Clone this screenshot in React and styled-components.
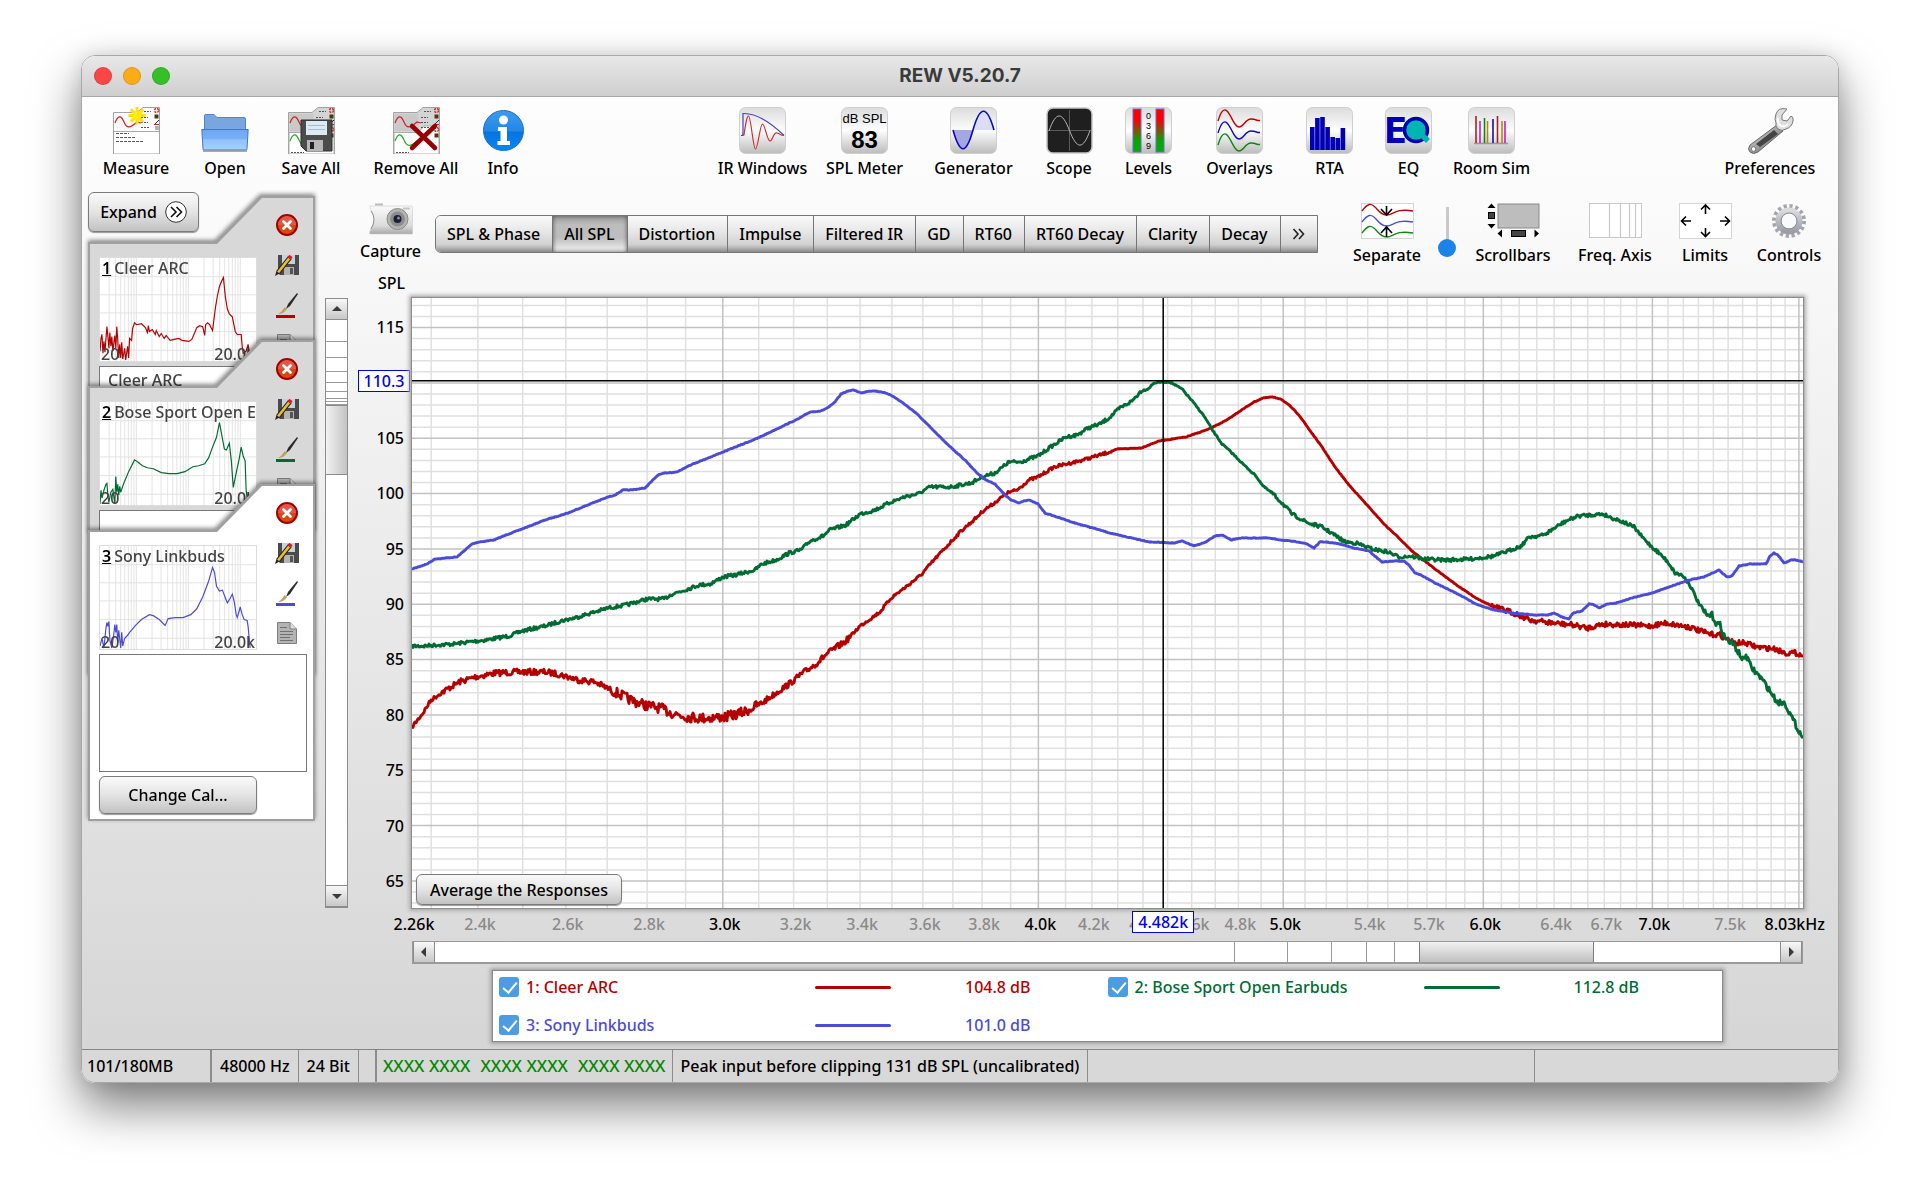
import { useState } from "react";
import styled, { createGlobalStyle, css } from "styled-components";

const FONT = '"Noto Sans", "Open Sans", sans-serif';
const RED = "#b40000";
const GREEN = "#006b32";
const BLUE = "#4b4bd8";

const PLOT_W = 1391;
const PLOT_H = 610;
const F_MIN = 2.26;
const F_MAX = 8.03;
const DB_MAX = 117.67;
const DB_MIN = 62.56;

const freqToX = (f) =>
  (Math.log(f / F_MIN) / Math.log(F_MAX / F_MIN)) * PLOT_W;
const dbToY = (db) => ((DB_MAX - db) / (DB_MAX - DB_MIN)) * PLOT_H;
const percent = (n, total) => `${(n / total) * 100}%`;

const parse = (s) => s.split(" ").map((p) => p.split(",").map(Number));

const toPath = (source, noise) => {
  const points = parse(source);
  let seed = 7;
  let d = "";
  for (let i = 0; i < points.length - 1; i++) {
    const [x0, y0] = points[i];
    const [x1, y1] = points[i + 1];
    for (let x = x0; x < x1; x++) {
      seed = (seed * 16807) % 2147483647;
      const jitter = (seed / 2147483647 - 0.5) * 2 * noise(x);
      const y = y0 + ((y1 - y0) * (x - x0)) / (x1 - x0) + jitter;
      d += `${d ? "L" : "M"}${x} ${y.toFixed(1)}`;
    }
  }
  const [lx, ly] = points[points.length - 1];
  return `${d}L${lx} ${ly}`;
};

const redNoise = (x) => {
  if (x < 30) return 2;
  if (x < 200) return 3;
  if (x < 345) return 5;
  if (x < 440) return 3;
  if (x < 700) return 1.5;
  if (x < 1080) return 0.3;
  return 2.6;
};
const greenNoise = (x) => (x > 1290 ? 3 : x > 730 && x < 860 ? 0.7 : 1.7);
const blueNoise = () => 0.3;

const measurements = [
  {
    id: 1,
    name: "Cleer ARC",
    color: RED,
    level: "104.8 dB",
    notes: "Cleer ARC",
    thumb:
      "0,95 1,82 2,78 3,97 4,85 5,96 7,70 8,80 9,92 10,76 11,90 12,80 13,95 15,79 16,92 17,70 18,84 19,102 20,88 21,102 22,86 23,103 25,92 26,104 28,90 29,102 30,82 32,84 33,72 35,66 37,68 42,67 46,71 48,76 49,69 50,75 53,73 56,78 57,74 60,80 62,77 65,82 67,79 71,84 75,83 80,82 83,84 90,85 93,83 96,76 98,71 101,69 104,70 106,79 107,68 109,66 111,68 114,74 117,50 119,38 121,29 123,24 125,20 127,40 129,52 131,57 134,60 137,75 139,78 143,78 144,90 145,97 148,95 150,88 152,101",
    path: toPath(
      "0,429 11,415 19,402 29,395 47,384 63,379 83,375 106,374 133,374 146,376 167,382 183,384 201,393 219,402 233,407 248,410 260,415 276,419 291,420 314,419 332,414 350,405 364,395 377,386 391,375 405,365 416,355 434,343 448,328 468,314 479,300 495,288 509,277 522,262 536,247 549,233 563,221 572,212 581,206 595,195 605,192 617,182 626,179 642,169 667,163 688,157 706,151 729,150 747,143 774,139 797,131 815,122 828,113 842,104 851,100 860,99 869,101 878,108 887,117 899,134 910,149 923,169 937,187 955,207 973,227 987,240 1000,253 1023,271 1046,288 1064,300 1082,309 1105,316 1118,322 1141,325 1161,327 1175,330 1191,326 1218,327 1238,328 1254,325 1277,329 1297,336 1308,337 1322,345 1333,345 1345,349 1363,351 1374,355 1385,355 1391,358",
      redNoise
    ),
  },
  {
    id: 2,
    name: "Bose Sport Open Earbuds",
    color: GREEN,
    level: "112.8 dB",
    notes: "",
    thumb:
      "0,104 1,90 2,98 4,90 6,84 7,83 8,96 9,102 11,92 13,89 15,104 16,76 17,92 18,84 19,95 20,86 21,92 24,83 29,71 35,59 38,61 43,65 48,67 54,68 62,72 70,73 78,73 86,71 94,66 100,65 106,63 110,57 114,46 118,36 121,21 123,32 126,48 128,49 131,42 133,60 135,87 138,72 141,58 143,46 145,55 147,60 148,90 150,104",
    path: toPath(
      "0,348 11,348 24,347 42,346 56,344 74,342 97,338 110,333 133,328 149,323 162,320 176,316 196,310 214,307 235,301 252,301 260,296 273,292 287,287 298,286 311,279 323,277 343,272 350,266 364,262 377,255 389,252 398,243 411,238 418,232 434,227 448,216 463,212 479,204 495,198 506,196 518,189 538,189 559,185 572,178 583,175 597,164 608,164 626,158 640,148 654,139 665,137 676,130 688,126 697,120 708,110 720,103 729,93 736,91 742,85 749,84 758,84 770,91 781,104 792,118 801,133 810,146 819,154 833,168 844,178 851,188 860,195 871,206 880,216 896,225 910,229 921,236 933,244 944,245 960,251 976,254 987,259 998,258 1012,261 1032,262 1059,261 1082,258 1096,253 1109,248 1117,239 1132,237 1141,231 1154,223 1166,218 1177,217 1191,216 1200,220 1209,223 1222,229 1231,240 1240,249 1247,255 1256,264 1263,275 1270,277 1277,285 1286,304 1295,318 1300,317 1304,325 1308,327 1313,340 1322,347 1331,362 1334,357 1339,369 1349,380 1356,390 1365,404 1373,405 1381,422 1391,440",
      greenNoise
    ),
  },
  {
    id: 3,
    name: "Sony Linkbuds",
    color: BLUE,
    level: "101.0 dB",
    notes: "",
    thumb:
      "0,102 2,94 4,104 6,84 7,78 8,82 9,77 10,96 12,104 14,90 15,80 16,88 17,80 18,98 19,86 21,104 22,88 23,102 25,94 28,91 30,88 36,81 42,75 50,70 54,71 60,75 64,79 66,81 69,74 76,73 84,73 92,70 98,64 104,52 110,36 114,22 116,27 118,41 121,46 124,45 127,53 129,58 132,53 134,49 136,57 138,70 139,73 141,66 142,62 144,70 146,75 149,76 150,82 152,104",
    path: toPath(
      "0,271 15,266 23,261 45,259 60,246 67,244 82,242 94,237 110,231 133,222 156,215 178,206 196,199 203,197 211,192 219,192 233,190 238,185 246,177 253,175 265,174 276,168 296,160 311,154 346,140 373,127 386,121 398,114 409,113 417,109 423,104 429,96 436,93 442,92 449,95 457,93 463,93 470,94 479,97 491,105 504,115 518,129 531,142 545,155 554,163 565,175 574,182 583,186 592,196 599,202 607,205 611,203 617,202 626,206 633,215 645,219 663,225 681,230 698,235 706,237 720,240 738,244 763,245 770,243 782,248 794,244 803,238 810,237 819,242 828,240 856,240 869,242 887,244 895,246 902,250 908,244 914,244 928,246 942,250 957,253 964,259 970,264 982,263 992,263 997,267 1003,275 1009,277 1023,285 1046,296 1064,306 1082,312 1100,315 1123,317 1136,317 1142,315 1150,319 1157,321 1161,315 1170,313 1177,306 1181,306 1187,310 1195,306 1204,305 1220,300 1240,295 1254,290 1277,282 1292,279 1307,272 1315,279 1320,278 1327,268 1338,266 1354,266 1358,258 1362,255 1366,257 1372,265 1379,262 1385,262 1391,264",
      blueNoise
    ),
  },
];

const graphTabs = [
  "SPL & Phase",
  "All SPL",
  "Distortion",
  "Impulse",
  "Filtered IR",
  "GD",
  "RT60",
  "RT60 Decay",
  "Clarity",
  "Decay",
];

const splTicks = [115, 110, 105, 100, 95, 90, 85, 80, 75, 70, 65];

const freqTicks = [
  2.4, 2.6, 2.8, 3, 3.2, 3.4, 3.6, 3.8, 4, 4.2, 4.4, 4.6, 4.8, 5, 5.4, 5.7, 6,
  6.4, 6.7, 7, 7.5,
];

/* ---------- icons ---------- */

const Tile = () => (
  <>
    <defs>
      <linearGradient id="tile" x1="0" y1="0" x2="0" y2="1">
        <stop offset="0" stopColor="#dcdcdc" />
        <stop offset="0.5" stopColor="#fdfdfd" />
        <stop offset="1" stopColor="#bcbcbc" />
      </linearGradient>
    </defs>
    <rect x="0.5" y="0.5" width="46" height="46" rx="6" fill="url(#tile)" stroke="#cfcfcf" />
  </>
);

const CardArt = ({ double }) => (
  <>
    <path d="M.5 5.500H24L30 .5H46.500V47H.5Z" fill={double ? "#d4d4d4" : "#fff"} stroke="#a2a2a2" />
    <rect x="1.500" y="7" width="24" height="17" fill={double ? "#c9c9c9" : "#fafafa"} />
    <path d="M2 16C5 8 8 8 11 15S17 21 24 15L28 16" fill="none" stroke="#c22" strokeWidth="1.200" />
    {double ? (
      <>
        <path d="M1 25.500H25L31 19H46V47H1Z" fill="#fff" stroke="#aaa" />
        <path d="M2 34C5 26 8 26 11 33S17 40 24 34" fill="none" stroke="#2a2" strokeWidth="1.200" />
        <path d="M3 45.500H16" stroke="#555" strokeDasharray="2 1" />
        <circle cx="43.500" cy="22.500" r="2" fill="none" stroke="#d22" strokeWidth="1.500" strokeDasharray="2 1" />
        <rect x="41.500" y="26.500" width="4" height="4" fill="#443c12" />
      </>
    ) : (
      <>
        <path d="M1 24.500H46" stroke="#aaa" />
        <path d="M3 26.500H16M3 30.500H22M3 34.500H31" stroke="#555" strokeDasharray="3 1" />
      </>
    )}
    <path d="M31 4.500H38M28 10.500H35M28 15.500H35M28 20.500H37" stroke="#555" strokeDasharray="2 1" />
    <circle cx="43.500" cy="3.500" r="2" fill="none" stroke="#d22" strokeWidth="1.500" strokeDasharray="2 1" />
    <rect x="41.500" y="7.500" width="4" height="4" fill="#443c12" />
    <path d="M42 17L46 13" stroke="#333" />
    <path d="M41 17.500H46" stroke="#c22" />
    {!double && <rect x="42" y="19" width="4" height="4" fill="#b5b5b5" />}
  </>
);

const MeasureIcon = () => (
  <svg width="47" height="47" viewBox="0 0 47 47">
    <CardArt />
    <g stroke="#ffe000" strokeWidth="3" strokeLinecap="round">
      <path d="M24 1V16M16.500 8.500H31.500M18.700 3.200L29.300 13.800M29.300 3.200L18.700 13.800" />
    </g>
    <circle cx="24" cy="8.500" r="4" fill="#ffec10" />
  </svg>
);

const OpenIcon = () => (
  <svg width="48" height="47" viewBox="0 0 48 47">
    <defs>
      <linearGradient id="folder" x1="0" y1="0" x2="0" y2="1">
        <stop offset="0" stopColor="#6fa6f0" />
        <stop offset="0.45" stopColor="#78b0f8" />
        <stop offset="0.5" stopColor="#92c2fa" />
        <stop offset="1" stopColor="#a6cffb" />
      </linearGradient>
    </defs>
    <path d="M3.500 24V8.500Q3.500 7.500 5 7.500H13L16 10.500H43Q44.500 10.500 44.500 12V24Z" fill="#7aa6e0" stroke="#5484c8" />
    <path d="M.8 22.500H47.200L46 42Q46 43 45 43H3Q2 43 2 42Z" fill="url(#folder)" stroke="#3f78cc" />
    <path d="M2 44H46" stroke="#8a8f98" strokeWidth="1.500" />
  </svg>
);

const SaveAllIcon = () => (
  <svg width="47" height="47" viewBox="0 0 47 47">
    <CardArt double />
    <path d="M13 13H44V44H18L13 39Z" fill="#4c4c4c" stroke="#2e2e2e" />
    <rect x="18" y="14" width="21" height="14" fill="#dce8f2" />
    <path d="M20 18.500H37M20 22.500H37" stroke="#a9bccb" />
    <rect x="19" y="33" width="16" height="11" fill="#b8b8b8" />
    <rect x="22" y="35" width="4" height="7" fill="#222" />
  </svg>
);

const RemoveAllIcon = () => (
  <svg width="47" height="47" viewBox="0 0 47 47">
    <CardArt double />
    <path d="M19 19L42 41M42 19L19 41" stroke="#980000" strokeWidth="4.500" strokeLinecap="round" />
  </svg>
);

const InfoIcon = () => (
  <svg width="47" height="47" viewBox="0 0 47 47">
    <defs>
      <linearGradient id="info" x1="0" y1="0" x2="0" y2="1">
        <stop offset="0" stopColor="#3d9bef" />
        <stop offset="0.5" stopColor="#2288e6" />
        <stop offset="0.55" stopColor="#0674e0" />
        <stop offset="1" stopColor="#0a86f4" />
      </linearGradient>
    </defs>
    <circle cx="23.500" cy="23.500" r="20" fill="url(#info)" stroke="#1b70c4" />
    <circle cx="23.500" cy="13" r="4.500" fill="#fff" />
    <path d="M18 20H27V34H30V38H17.500V34H20.500V24H18Z" fill="#fff" />
  </svg>
);

const IrIcon = () => (
  <svg width="47" height="47" viewBox="0 0 47 47">
    <Tile />
    <path d="M2 28.500H4V6.500C17 6 30 14 45 28.500" fill="none" stroke="#4040c8" strokeWidth="1.200" />
    <path d="M3 28H5C7 14 8 9 9.500 9C12 9 14 42 16.500 42S21 17 23.500 17S28 34 31 34S34 25 38 26S41 28.500 45 28.500" fill="none" stroke="#c83030" strokeWidth="1.200" />
  </svg>
);

const SplIcon = () => (
  <svg width="47" height="47" viewBox="0 0 47 47">
    <Tile />
    <IconText x="23.500" y="16" $size={13}>dB SPL</IconText>
    <IconText x="23.500" y="41" $size={24} $bold>83</IconText>
  </svg>
);

const GeneratorIcon = () => (
  <svg width="47" height="47" viewBox="0 0 47 47">
    <Tile />
    <path d="M3 23C10 48 16 48 23 23Z" fill="#a6a6e2" />
    <path d="M23 23C30 -2 37 -2 44 23Z" fill="#dcdcf3" />
    <path d="M3 23C10 48 16 48 23 23S37 -2 44 23" fill="none" stroke="#0808c0" strokeWidth="1.600" />
  </svg>
);

const ScopeIcon = () => (
  <svg width="47" height="47" viewBox="0 0 47 47">
    <rect x="1" y="1" width="45" height="45" rx="6" fill="#1f1f1f" stroke="#c6c6c6" strokeWidth="1.500" />
    <path d="M23.500 3V44M2 23.500H45" stroke="#5a5a5a" />
    <path d="M3 24C10 4 16 4 23.500 23.500S37 43 44 23.500" fill="none" stroke="#b5b5b5" />
  </svg>
);

const LevelsIcon = () => (
  <svg width="47" height="47" viewBox="0 0 47 47">
    <defs>
      <linearGradient id="level" x1="0" y1="0" x2="0" y2="1">
        <stop offset="0.25" stopColor="#f00" />
        <stop offset="0.75" stopColor="#0a0" />
      </linearGradient>
    </defs>
    <Tile />
    <rect x="8" y="2" width="8" height="43" fill="url(#level)" stroke="#6a6ad0" />
    <rect x="31" y="2" width="8" height="43" fill="url(#level)" stroke="#6a6ad0" />
    {[0, 3, 6, 9].map((n, i) => (
      <IconText key={n} x="23.500" y={12 + i * 10} $size={9}>{n}</IconText>
    ))}
  </svg>
);

const OverlaysIcon = () => (
  <svg width="47" height="47" viewBox="0 0 47 47">
    <Tile />
    {["#c00000", "#0c0cc8", "#0a8a0a"].map((color, i) => (
      <path key={color} transform={`translate(0 ${i * 12})`} d="M2 14C5 4 8 1 11 4C16 9 18 20 23 20S29 12 35 12S40 14 44 13.500" fill="none" stroke={color} strokeWidth="1.400" />
    ))}
  </svg>
);

const RtaIcon = () => (
  <svg width="47" height="47" viewBox="0 0 47 47">
    <Tile />
    {[20, 11, 10, 20, 30, 31, 21].map((top, i) => (
      <rect key={i} x={4 + i * 5.1} y={top} width="4.600" height={43 - top} fill="#0000b4" />
    ))}
  </svg>
);

const EqIcon = () => (
  <svg width="47" height="47" viewBox="0 0 47 47">
    <Tile />
    <EqLetter x="0" y="36">E</EqLetter>
    <circle cx="31" cy="23" r="11.500" fill="#00b4b4" stroke="#0000b0" strokeWidth="3.500" />
    <path d="M36 31L40 27L45 32L41 36Z" fill="#00b4b4" />
  </svg>
);

const RoomIcon = () => (
  <svg width="47" height="47" viewBox="0 0 47 47">
    <Tile />
    <path d="M6 36.500H40" stroke="#999" strokeWidth="1.500" />
    {[
      [8, 9, "#b02020"],
      [12, 14, "#c020c0"],
      [16.5, 11, "#108020"],
      [19.5, 14, "#b8860b"],
      [25, 12, "#1010b0"],
      [29.5, 9, "#b02020"],
      [34, 14, "#b8860b"],
      [37, 14, "#c020c0"],
    ].map(([x, y, color]) => (
      <path key={x} d={`M${x} ${y}V36`} stroke={color} strokeWidth="1.600" />
    ))}
  </svg>
);

const WrenchIcon = () => (
  <svg width="47" height="47" viewBox="0 0 47 47">
    <defs>
      <linearGradient id="steel" x1="0" y1="0" x2="1" y2="1">
        <stop offset="0" stopColor="#f2f2f2" />
        <stop offset="0.5" stopColor="#a0a0a0" />
        <stop offset="1" stopColor="#555" />
      </linearGradient>
    </defs>
    <path d="M30 18L36 24L11 45Q6 48 3 45T3 38Z" fill="url(#steel)" stroke="#666" />
    <path d="M27 23L31 27L13 40L9 37Z" fill="#444" />
    <circle cx="6.500" cy="42" r="2.300" fill="#fff" stroke="#777" />
    <path d="M40 2Q31 0 29 7Q27 12 29 16Q28 19 31 22Q35 25 39 22Q45 20 46 14Q47 10 44 9L40 14L35 13L35 8Z" fill="#dedede" stroke="#777" />
    <path d="M31 11Q30 16 34 19Q38 20 41 17" fill="none" stroke="#fff" strokeWidth="2" />
  </svg>
);

const CameraIcon = () => (
  <svg width="44" height="32" viewBox="0 0 44 32">
    <defs>
      <linearGradient id="camera" x1="0" y1="0" x2="0" y2="1">
        <stop offset="0" stopColor="#fafafa" />
        <stop offset="0.7" stopColor="#dcdcdc" />
        <stop offset="1" stopColor="#a8a8a8" />
      </linearGradient>
    </defs>
    <path d="M6 1.500H14" stroke="#b9b9b9" strokeWidth="2" />
    <path d="M1 3H42Q43.500 3 43.500 5V31H1Q0 31 1 28Q9 16 1 5Z" fill="url(#camera)" stroke="#c9c9c9" strokeWidth="0.600" />
    <path d="M2 8Q8 16 2 26" fill="none" stroke="#8f8f8f" />
    <path d="M34 5.500H41" stroke="#c4c4c4" strokeWidth="2" />
    <circle cx="28.500" cy="16" r="10.500" fill="#b4b4b4" stroke="#8b8b8b" />
    <circle cx="28.500" cy="16" r="7.500" fill="#8d8d8d" />
    <circle cx="28.500" cy="16" r="4" fill="#1d2030" />
    <circle cx="29.500" cy="15" r="1.500" fill="#7d86c0" />
  </svg>
);

const SeparateIcon = () => (
  <svg width="53" height="36" viewBox="0 0 53 36">
    <rect x="0.5" y="0.5" width="52" height="35" fill="#fff" stroke="#d4d4d4" />
    {["#c00000", BLUE, "#0a8a0a"].map((color, i) => (
      <path key={color} transform={`translate(0 ${i * 11})`} d="M1 8C7 0 10 0 14 4S20 12 26 12S34 5 52 8" fill="none" stroke={color} strokeWidth="1.300" />
    ))}
    <path d="M25.500 3V12M20 6L25.500 12L31 6M25.500 34V24M20 30L25.500 24L31 30" fill="none" stroke="#000" strokeWidth="1.600" />
  </svg>
);

const ScrollbarsIcon = () => (
  <svg width="53" height="36" viewBox="0 0 53 36">
    <rect x="11" y="1" width="41" height="24" fill="#bdbdbd" stroke="#8a8a8a" />
    <rect x="1.500" y="9.500" width="6" height="6" fill="#444" stroke="#000" />
    <path d="M.5 5L4.500 .5L8.500 5ZM.5 21L4.500 25.500L8.500 21Z" />
    <rect x="24.500" y="27.500" width="14" height="6" fill="#444" stroke="#000" />
    <path d="M15 26.500L10.500 30.500L15 34.500ZM47.500 26.500L52 30.500L47.500 34.500Z" />
  </svg>
);

const FreqAxisIcon = () => (
  <svg width="53" height="36" viewBox="0 0 53 36">
    <rect x="0.5" y="0.5" width="52" height="34" fill="#fff" stroke="#c8c8c8" />
    <path d="M20.500 1V34M31.500 1V34M40.500 1V34M46.500 1V34" stroke="#c8c8c8" strokeWidth="1.200" />
  </svg>
);

const LimitsIcon = () => (
  <svg width="53" height="36" viewBox="0 0 53 36">
    <rect x="0.5" y="0.5" width="52" height="35" fill="#fff" stroke="#d4d4d4" />
    <path d="M26.500 11V2M22 6.500L26.500 2L31 6.500M26.500 25V33.500M22 29L26.500 33.500L31 29M12 18H2.500M7 13.500L2.500 18L7 22.500M41 18H50.500M46 13.500L50.500 18L46 22.500" fill="none" stroke="#000" strokeWidth="1.600" />
  </svg>
);

const GearIcon = () => (
  <svg width="36" height="36" viewBox="0 0 36 36">
    <defs>
      <linearGradient id="gear" x1="0" y1="0" x2="0" y2="1">
        <stop offset="0" stopColor="#dadae0" />
        <stop offset="1" stopColor="#9d9da6" />
      </linearGradient>
    </defs>
    <circle cx="18" cy="18" r="15" fill="none" stroke="#a4a4ad" strokeWidth="4" strokeDasharray="3.200 2.690" />
    <circle cx="18" cy="18" r="10.500" fill="none" stroke="url(#gear)" strokeWidth="6" />
    <circle cx="18" cy="18" r="8" fill="none" stroke="#8d8d95" />
  </svg>
);

const CloseIcon = () => (
  <svg width="22" height="22" viewBox="0 0 22 22">
    <circle cx="11" cy="11" r="10" fill="#d9480c" stroke="#a00000" strokeWidth="2" />
    <path d="M2 11A9 9 0 0 1 20 11Z" fill="#e0564a" />
    <path d="M7.500 7.500L14.500 14.500M14.500 7.500L7.500 14.500" stroke="#fff" strokeWidth="2.800" strokeLinecap="round" />
  </svg>
);

const RenameIcon = () => (
  <svg width="24" height="22" viewBox="0 0 24 22">
    <path d="M3 1H24V21H5L3 19Z" fill="#4a4a4a" />
    <rect x="7" y="1" width="13" height="9" fill="#c3d3de" />
    <rect x="9" y="13" width="10" height="8" fill="#b4b4b4" />
    <rect x="15" y="14" width="3" height="6" fill="#555" />
    <path d="M3 18.500L15 3.500" stroke="#222" strokeWidth="4.600" />
    <path d="M2.800 18.700L14.500 4" stroke="#f0c020" strokeWidth="2.600" />
    <path d="M14 4.500L16 2" stroke="#d81c1c" strokeWidth="4" />
    <path d="M0 22L1.500 17L4.500 19.500Z" fill="#222" />
  </svg>
);

const BrushIcon = ({ color }) => (
  <svg width="22" height="26" viewBox="0 0 22 26">
    <path d="M21 0L12 11L10 16L14 13L22 1Z" fill="#2b2b2b" />
    <path d="M8.500 14L11 16Q8 21 2 21Q6 19 8.500 14Z" fill="#bfa060" />
    <rect y="22" width="19" height="3" fill={color} />
  </svg>
);

const NotesIcon = () => (
  <svg width="22" height="24" viewBox="0 0 22 24">
    <path d="M1.500 1.500H14L20.500 8V22.500H1.500Z" fill="#b4b4b4" stroke="#7d7d7d" strokeLinejoin="round" />
    <path d="M14 1.500V8H20.500" fill="#ddd" stroke="#7d7d7d" />
    <path d="M4 6.500H11M4 10.500H17M4 13.500H17M4 16.500H14M4 19.500H17" stroke="#707070" />
  </svg>
);

const ChevronsIcon = () => (
  <svg width="22" height="22" viewBox="0 0 22 22">
    <circle cx="11" cy="11" r="10.300" fill="#fff" stroke="#333" />
    <path d="M6 6L11 11L6 16M11.500 6L16.500 11L11.500 16" fill="none" stroke="#111" strokeWidth="1.600" />
  </svg>
);

const MoreIcon = () => (
  <svg width="13" height="12" viewBox="0 0 13 12">
    <path d="M1.500 1L6 6L1.500 11M7 1L11.500 6L7 11" fill="none" stroke="#222" strokeWidth="1.600" />
  </svg>
);

const arrows = {
  up: "M1 7L6 2L11 7Z",
  down: "M1 3L6 8L11 3Z",
  left: "M8 0L3 5L8 10Z",
  right: "M4 0L9 5L4 10Z",
};

const Arrow = ({ to }) => (
  <svg width="12" height="10" viewBox="0 0 12 10">
    <path d={arrows[to]} fill="#3a3a3a" />
  </svg>
);

/* ---------- parts ---------- */

const fileTools = [
  ["Measure", MeasureIcon],
  ["Open", OpenIcon],
  ["Save All", SaveAllIcon],
  ["Remove All", RemoveAllIcon],
  ["Info", InfoIcon],
];

const windowTools = [
  ["IR Windows", IrIcon],
  ["SPL Meter", SplIcon],
  ["Generator", GeneratorIcon],
  ["Scope", ScopeIcon],
  ["Levels", LevelsIcon],
  ["Overlays", OverlaysIcon],
  ["RTA", RtaIcon],
  ["EQ", EqIcon],
  ["Room Sim", RoomIcon],
];

const Tool = ({ label, icon: Icon }) => (
  <ToolButton type="button">
    <Icon />
    {label}
  </ToolButton>
);

const thumbLines = () => {
  const xs = [];
  [10, 100, 1000, 10000].forEach((decade) => {
    for (let n = 1; n < 10; n++) {
      const f = n * decade;
      if (f > 20 && f < 20000) xs.push((Math.log10(f / 20) / 3) * 158);
    }
  });
  return xs;
};

const MeasurementCard = ({ item, active }) => (
  <CardShadow $active={active}>
    <CardEdge>
      <CardBody $active={active}>
        <Thumbnail>
          <ThumbChart viewBox="0 0 158 105" preserveAspectRatio="none">
            <path
              d={`${thumbLines().map((x) => `M${x.toFixed(1)} 0V105`).join("")}M0 19H158M0 37.500H158M0 56H158M0 75H158M0 94H158`}
              stroke="#e2e2e2"
              fill="none"
            />
            <polyline points={item.thumb} fill="none" stroke={item.color} strokeWidth="1.200" />
          </ThumbChart>
          <ThumbTitle>
            <b>{item.id}</b>
            {item.name}
          </ThumbTitle>
          <ThumbRange>
            <span>20</span>
            <span>20.0k</span>
          </ThumbRange>
        </Thumbnail>
        <CardActions>
          <IconButton type="button" aria-label={`Remove ${item.name}`}>
            <CloseIcon />
          </IconButton>
          <IconButton type="button" aria-label={`Save ${item.name}`}>
            <RenameIcon />
          </IconButton>
          <IconButton type="button" aria-label={`Colour of ${item.name}`}>
            <BrushIcon color={item.color} />
          </IconButton>
          <IconButton type="button" aria-label={`Notes of ${item.name}`}>
            <NotesIcon />
          </IconButton>
        </CardActions>
        <Notes aria-label={`Notes for ${item.name}`} defaultValue={item.notes} />
        {active && <PushButton type="button">Change Cal...</PushButton>}
      </CardBody>
    </CardEdge>
  </CardShadow>
);

const minorFreqs = Array.from({ length: 58 }, (_, i) => (23 + i) / 10);
const minorDbs = Array.from({ length: 55 }, (_, i) => 63 + i);

const gridPath = (major) =>
  minorFreqs
    .filter((f) => Number.isInteger(f) === major)
    .map((f) => `M${freqToX(f).toFixed(1)} 0V${PLOT_H}`)
    .concat(
      minorDbs
        .filter((db) => (db % 5 === 0) === major)
        .map((db) => `M0 ${dbToY(db).toFixed(1)}H${PLOT_W}`)
    )
    .join("");

const cursor = { freq: 4.482, db: 110.19, label: "110.3" };

const App = () => {
  const [tab, setTab] = useState("All SPL");
  const [hidden, setHidden] = useState([]);

  const toggle = (id) =>
    setHidden((ids) =>
      ids.includes(id) ? ids.filter((i) => i !== id) : [...ids, id]
    );

  const cursorLeft = percent(freqToX(cursor.freq), PLOT_W);
  const cursorTop = percent(dbToY(cursor.db), PLOT_H);

  return (
    <Page>
      <GlobalStyle />
      <Window>
        <TitleBar>
          <Lights>
            <Light type="button" aria-label="Close" $color="#fb4646" />
            <Light type="button" aria-label="Minimise" $color="#fdac18" />
            <Light type="button" aria-label="Zoom" $color="#35c029" />
          </Lights>
          <Title>REW V5.20.7</Title>
        </TitleBar>

        <Toolbar>
          <ToolGroup $columns="84px 94px 78px 132px 42px">
            {fileTools.map(([label, icon]) => (
              <Tool key={label} label={label} icon={icon} />
            ))}
          </ToolGroup>
          <ToolGroup $columns="98px 106px 112px 79px 80px 102px 78px 80px 86px">
            {windowTools.map(([label, icon]) => (
              <Tool key={label} label={label} icon={icon} />
            ))}
          </ToolGroup>
          <ToolGroup $columns="92px">
            <Tool label="Preferences" icon={WrenchIcon} />
          </ToolGroup>
        </Toolbar>

        <Main>
          <Sidebar>
            <ExpandButton type="button">
              Expand <ChevronsIcon />
            </ExpandButton>
            <CardStack>
              {measurements.map((item) => (
                <MeasurementCard key={item.id} item={item} active={item.id === 3} />
              ))}
            </CardStack>
          </Sidebar>

          <Content>
            <GraphHeader>
              <GraphTool type="button">
                <CameraIcon />
                Capture
              </GraphTool>
              <Tabs>
                {graphTabs.map((name) => (
                  <Tab key={name} type="button" $active={name === tab} onClick={() => setTab(name)}>
                    {name}
                  </Tab>
                ))}
                <Tab type="button" aria-label="More graphs">
                  <MoreIcon />
                </Tab>
              </Tabs>
              <GraphControls>
                <GraphTool type="button"><SeparateIcon />Separate</GraphTool>
                <SeparationSlider type="range" aria-label="Separation" defaultValue="0" />
                <GraphTool type="button"><ScrollbarsIcon />Scrollbars</GraphTool>
                <GraphTool type="button"><FreqAxisIcon />Freq. Axis</GraphTool>
                <GraphTool type="button"><LimitsIcon />Limits</GraphTool>
                <GraphTool type="button"><GearIcon />Controls</GraphTool>
              </GraphControls>
            </GraphHeader>

            <AxisTitle>SPL</AxisTitle>

            <ChartRow>
              <ScrollColumn>
                <ScrollButton type="button" aria-label="Scroll up"><Arrow to="up" /></ScrollButton>
                <ScrollTrack>
                  {[21, 37, 51, 62, 71, 78, 81, 84].map((n) => (
                    <RowMark key={n} style={{ top: percent(n, 567) }} />
                  ))}
                  <ScrollThumbY style={{ top: percent(85, 567), height: percent(71, 567) }} />
                </ScrollTrack>
                <ScrollButton type="button" aria-label="Scroll down"><Arrow to="down" /></ScrollButton>
              </ScrollColumn>
              <SplAxis>
                {splTicks.map((db) => (
                  <SplTick key={db} $covered={db === 110}>{db}</SplTick>
                ))}
                <CursorDb style={{ top: cursorTop }}>{cursor.label}</CursorDb>
              </SplAxis>
              <Plot>
                <PlotSvg viewBox={`0 0 ${PLOT_W} ${PLOT_H}`} preserveAspectRatio="none">
                  <path d={gridPath(false)} stroke="#e0e0e0" strokeWidth="1.500" />
                  <path d={gridPath(true)} stroke="#c2c2c2" strokeWidth="1.500" />
                  {measurements
                    .filter((m) => !hidden.includes(m.id))
                    .map((m) => (
                      <path key={m.id} d={m.path} fill="none" stroke={m.color} strokeWidth="2.900" strokeLinejoin="round" />
                    ))}
                  <path
                    d={`M0 ${dbToY(cursor.db).toFixed(1)}H${PLOT_W}M${freqToX(cursor.freq).toFixed(1)} 0V${PLOT_H}`}
                    stroke="#000"
                    strokeWidth="1.500"
                  />
                </PlotSvg>
                <AverageButton type="button">Average the Responses</AverageButton>
              </Plot>
            </ChartRow>

            <FreqAxis>
              <FreqTick $major style={{ left: 0 }}>2.26k</FreqTick>
              {freqTicks.map((f) => (
                <FreqTick key={f} $major={Number.isInteger(f)} style={{ left: percent(freqToX(f), PLOT_W) }}>
                  {f.toFixed(1)}k
                </FreqTick>
              ))}
              <FreqTick $major $last style={{ left: "100%" }}>8.03kHz</FreqTick>
              <CursorFreq style={{ left: cursorLeft }}>{cursor.freq}k</CursorFreq>
            </FreqAxis>

            <ScrollRow>
              <ScrollButton type="button" aria-label="Scroll left"><Arrow to="left" /></ScrollButton>
              <ScrollTrack>
                {[800, 853, 897, 932, 960].map((n) => (
                  <ColumnMark key={n} style={{ left: percent(n, 1347) }} />
                ))}
                <ScrollThumbX style={{ left: percent(985, 1347), width: percent(176, 1347) }} />
              </ScrollTrack>
              <ScrollButton type="button" aria-label="Scroll right"><Arrow to="right" /></ScrollButton>
            </ScrollRow>

            <Legend>
              {measurements.map((m) => (
                <LegendItem key={m.id} $color={m.color}>
                  <LegendLabel>
                    <Checkbox type="checkbox" checked={!hidden.includes(m.id)} onChange={() => toggle(m.id)} />
                    {m.id}: {m.name}
                  </LegendLabel>
                  <LegendLine />
                  <span>{m.level}</span>
                </LegendItem>
              ))}
            </Legend>
          </Content>
        </Main>

        <StatusBar>
          <MemoryCell>101/180MB</MemoryCell>
          <StatusCell>48000 Hz</StatusCell>
          <StatusCell>24 Bit</StatusCell>
          <SpacerCell />
          <MeterCell>
            <span>XXXX XXXX</span>
            <span>XXXX XXXX</span>
            <span>XXXX XXXX</span>
          </MeterCell>
          <StatusCell>Peak input before clipping 131 dB SPL (uncalibrated)</StatusCell>
          <StatusCell $grow={3} />
          <StatusCell $grow={2} />
        </StatusBar>
      </Window>
    </Page>
  );
};

export default App;

/* ---------- styles ---------- */

const GlobalStyle = createGlobalStyle`
  * {
    box-sizing: border-box;
  }

  body {
    margin: 0;
    background: #fff;
    color: #000;
    font: 500 16px/20px ${FONT};
  }

  button, textarea, input {
    font: inherit;
    color: inherit;
    margin: 0;
    padding: 0;
  }

  svg {
    display: block;
    flex: none;
  }
`;

const raised = css`
  border: 1px solid #7b7b7b;
  border-radius: 6px;
  background: linear-gradient(#fafafa, #e4e4e4 50%, #c2c2c2);
  box-shadow: 0 1px 1px rgba(0, 0, 0, 0.4);
`;

const IconText = styled.text`
  font-family: "Liberation Sans", sans-serif;
  font-size: ${({ $size }) => $size}px;
  font-weight: ${({ $bold }) => ($bold ? 700 : 400)};
  text-anchor: middle;
`;

const EqLetter = styled.text`
  font: 900 36px Roboto, sans-serif;
  fill: #0000b4;
`;

const Page = styled.div`
  display: flex;
  min-height: 100vh;
  padding: 55px 81px 107px;
`;

const Window = styled.div`
  display: flex;
  flex-direction: column;
  flex: 1;
  min-width: 0;
  border: 1px solid #a8a8a8;
  border-radius: 14px;
  overflow: hidden;
  background: linear-gradient(#fefefe, #fbfbfb 14%, #d6d6d6 96%);
  box-shadow: 0 24px 48px rgba(0, 0, 0, 0.5), 0 0 20px rgba(0, 0, 0, 0.12);
`;

const TitleBar = styled.header`
  display: grid;
  grid-template-columns: 1fr auto 1fr;
  align-items: center;
  height: 41px;
  padding: 0 12px;
  border-bottom: 1px solid #a6a6a6;
  background: linear-gradient(#e8e8e8, #cfcfcf);
`;

const Lights = styled.div`
  display: flex;
  gap: 11px;
`;

const Light = styled.button`
  width: 18px;
  height: 18px;
  border: 1px solid rgba(0, 0, 0, 0.12);
  border-radius: 50%;
  background: ${({ $color }) => $color};
`;

const Title = styled.h1`
  margin: 0;
  font-family: Inter, sans-serif;
  font-size: 19px;
  font-weight: 700;
  color: #3a3a3a;
`;

const Toolbar = styled.nav`
  display: flex;
  justify-content: space-between;
  padding: 10px 22px 8px 12px;
`;

const ToolGroup = styled.div`
  display: grid;
  grid-template-columns: ${({ $columns }) => $columns};
`;

const ToolButton = styled.button`
  display: flex;
  flex-direction: column;
  align-items: center;
  gap: 4px;
  border: 0;
  background: none;
  white-space: nowrap;
`;

const Main = styled.main`
  display: flex;
  flex: 1;
`;

const Sidebar = styled.aside`
  flex: none;
  width: 240px;
  padding: 6px 6px 0;
`;

const ExpandButton = styled.button`
  ${raised}
  display: flex;
  align-items: center;
  justify-content: center;
  gap: 8px;
  width: 111px;
  height: 40px;
`;

const CardStack = styled.div`
  width: 227px;
  margin-top: -36px;
  pointer-events: none;
`;

const CardShadow = styled.div`
  height: 337px;
  margin-bottom: ${({ $active }) => ($active ? 0 : -193)}px;
  filter: drop-shadow(0 -2px 2px rgba(0, 0, 0, 0.45));
`;

const cardShape = css`
  clip-path: polygon(0 46px, 127px 46px, 172px 0, 100% 0, 100% 100%, 0 100%);
`;

const CardEdge = styled.div`
  ${cardShape}
  height: 100%;
  padding: 2px;
  background: #a0a0a0;
`;

const CardBody = styled.section`
  ${cardShape}
  display: grid;
  grid-template-columns: 158px 1fr;
  grid-template-rows: 164px 118px 38px;
  row-gap: 4px;
  height: 100%;
  padding-left: 9px;
  background: ${({ $active }) => ($active ? "#fff" : "#d8d8d8")};
  pointer-events: auto;
`;

const Thumbnail = styled.div`
  position: relative;
  display: flex;
  flex-direction: column;
  justify-content: space-between;
  align-self: end;
  height: 105px;
  border: 1px solid #dcdcdc;
  background: #fff;
  color: #444;
  overflow: hidden;
`;

const ThumbChart = styled.svg`
  position: absolute;
  inset: 0;
  width: 100%;
  height: 100%;
`;

const ThumbTitle = styled.div`
  position: relative;
  display: flex;
  gap: 3px;
  padding-left: 2px;
  white-space: nowrap;

  b {
    font-weight: 600;
    color: #000;
    text-decoration: underline;
  }
`;

const ThumbRange = styled.div`
  position: relative;
  display: flex;
  justify-content: space-between;
  line-height: 14px;
  padding: 0 1px;
`;

const CardActions = styled.div`
  display: flex;
  flex-direction: column;
  align-items: center;
  gap: 16px;
  padding: 15px 0 0 4px;
`;

const IconButton = styled.button`
  display: grid;
  place-items: center;
  width: 24px;
  height: 24px;
  border: 0;
  background: none;
`;

const Notes = styled.textarea`
  grid-column: 1 / -1;
  width: 208px;
  padding: 3px 8px;
  border: 1px solid #777;
  background: #fff;
  color: #444;
  resize: none;
`;

const PushButton = styled.button`
  ${raised}
`;

const Content = styled.div`
  display: flex;
  flex-direction: column;
  flex: 1;
  min-width: 0;
  padding: 0 0 8px 3px;
`;

const GraphHeader = styled.div`
  display: flex;
  align-items: flex-start;
  padding: 17px 0 8px 35px;
`;

const GraphTool = styled(ToolButton)`
  gap: 6px;
`;

const Tabs = styled.div`
  display: flex;
  margin: 12px 0 0 14px;
  border: 1px solid #757575;
  border-radius: 6px 0 0 6px;
  overflow: hidden;
`;

const Tab = styled.button`
  height: 36px;
  padding: 0 12px 0 11px;
  border: 0;
  background: linear-gradient(#fafafa, #e6e6e6 45%, #d0d0d0 80%, #8c8c8c);
  white-space: nowrap;

  & + & {
    border-left: 1px solid #757575;
  }

  ${({ $active }) =>
    $active &&
    css`
      background: linear-gradient(#9c9c9c, #bdbdbd 25%, #bdbdbd 60%, #f4f4f4);
      box-shadow: inset 0 0 4px #555;
    `}
`;

const GraphControls = styled.div`
  display: grid;
  grid-template-columns: 82px 38px 94px 110px 70px 98px;
  margin-left: auto;
`;

const SeparationSlider = styled.input`
  appearance: none;
  writing-mode: vertical-lr;
  direction: rtl;
  justify-self: center;
  width: 18px;
  height: 50px;
  margin-top: 4px;
  background: linear-gradient(#c8c8c8, #c8c8c8) center / 3px 100% no-repeat;

  &::-webkit-slider-thumb {
    appearance: none;
    width: 18px;
    height: 18px;
    border-radius: 50%;
    background: #1c83e8;
  }
`;

const AxisTitle = styled.div`
  width: 80px;
  height: 25px;
  text-align: right;
`;

const ChartRow = styled.div`
  display: flex;
  flex: 1;
  padding-right: 35px;
`;

const ScrollButton = styled.button`
  display: grid;
  place-items: center;
  flex: none;
  width: 22px;
  height: 22px;
  border: 1px solid #8c8c8c;
  background: linear-gradient(#f8f8f8, #c8c8c8);
`;

const ScrollTrack = styled.div`
  position: relative;
  flex: 1;
  background: #fff;
`;

const ScrollColumn = styled.div`
  display: flex;
  flex-direction: column;
  width: 23px;
  border: 1px solid #8c8c8c;
  border-top: 0;
  background: #fff;

  ${ScrollButton} {
    width: 100%;
    border-left: 0;
    border-right: 0;
  }
`;

const ScrollRow = styled.div`
  display: flex;
  height: 23px;
  margin: 0 35px 0 87px;
  border: 1px solid #9a9a9a;
  border-bottom-width: 2px;

  ${ScrollButton} {
    height: 100%;
    border-top: 0;
    border-bottom: 0;
  }
`;

const RowMark = styled.div`
  position: absolute;
  left: 0;
  right: 0;
  height: 1px;
  background: #9a9a9a;
`;

const ColumnMark = styled.div`
  position: absolute;
  top: 0;
  bottom: 0;
  width: 1px;
  background: #9a9a9a;
`;

const ScrollThumbY = styled.div`
  position: absolute;
  left: 0;
  right: 0;
  border: solid #8c8c8c;
  border-width: 1px 0;
  background: linear-gradient(90deg, #f2f2f2, #c4c4c4);
`;

const ScrollThumbX = styled.div`
  position: absolute;
  top: 0;
  bottom: 0;
  border: solid #7c7c7c;
  border-width: 0 1px;
  background: linear-gradient(#f2f2f2, #c0c0c0);
`;

const SplAxis = styled.div`
  position: relative;
  display: flex;
  flex-direction: column;
  justify-content: space-between;
  width: 64px;
  padding: 19px 8px 17px 0;
  text-align: right;
`;

const SplTick = styled.span`
  visibility: ${({ $covered }) => ($covered ? "hidden" : "visible")};
`;

const cursorBox = css`
  position: absolute;
  height: 22px;
  border: 1px solid #0000f0;
  background: #fff;
  color: #0000f0;
  text-align: center;
`;

const CursorDb = styled.div`
  ${cursorBox}
  right: 2px;
  width: 52px;
  transform: translateY(-50%);
`;

const Plot = styled.div`
  position: relative;
  flex: 1;
  min-width: 0;
  min-height: 400px;
  background: #fff;
  box-shadow: 0 0 1px 1px #8e8e8e, 0 0 4px 3px #b0b0b0;
`;

const PlotSvg = styled.svg`
  position: absolute;
  inset: 0;
  width: 100%;
  height: 100%;
`;

const AverageButton = styled.button`
  ${raised}
  position: absolute;
  left: 4px;
  bottom: 3px;
  width: 206px;
  height: 31px;
`;

const FreqAxis = styled.div`
  position: relative;
  height: 33px;
  margin: 0 35px 0 87px;
`;

const FreqTick = styled.span`
  position: absolute;
  top: 6px;
  padding-left: 4px;
  transform: translateX(${({ $last }) => ($last ? "-66%" : "-50%")});
  color: ${({ $major }) => ($major ? "#000" : "#8a8a8a")};
`;

const CursorFreq = styled.div`
  ${cursorBox}
  top: 3px;
  width: 62px;
  transform: translateX(-50%);
`;

const Legend = styled.div`
  display: grid;
  grid-template-columns: 1fr 1fr;
  align-content: center;
  align-self: center;
  row-gap: 18px;
  width: 1229px;
  max-width: 90%;
  height: 70px;
  margin: 7px 35px 0 87px;
  padding: 0 6px;
  background: #fff;
  box-shadow: 0 0 1px 1px #8a8a8a, 0 0 4px 3px #a8a8a8;
`;

const LegendItem = styled.div`
  display: grid;
  grid-template-columns: 316px 76px 1fr;
  align-items: center;
  color: ${({ $color }) => $color};

  & > span {
    padding-left: 74px;
  }
`;

const LegendLabel = styled.label`
  display: flex;
  align-items: center;
  gap: 7px;
`;

const LegendLine = styled.div`
  height: 3px;
  border-radius: 2px;
  background: currentColor;
`;

const Checkbox = styled.input`
  appearance: none;
  position: relative;
  width: 20px;
  height: 20px;
  border-radius: 3px;
  background: #4d9ce2;

  &:checked::after {
    content: "";
    position: absolute;
    left: 7px;
    top: 2px;
    width: 6px;
    height: 12px;
    border: solid #fff;
    border-width: 0 2px 2px 0;
    transform: rotate(40deg);
  }
`;

const StatusBar = styled.footer`
  display: flex;
  height: 33px;
  border-top: 1px solid #858585;
  background: #d8d8d8;
`;

const StatusCell = styled.div`
  display: flex;
  align-items: center;
  flex: ${({ $grow }) => ($grow ? `${$grow} 0 0` : "none")};
  padding: 0 8px;
  white-space: nowrap;

  & + & {
    border-left: 1px solid #8c8c8c;
  }
`;

const MemoryCell = styled(StatusCell)`
  width: 129px;
  padding: 0 5px;
  border-right: 1px solid #8c8c8c;
`;

const SpacerCell = styled(StatusCell)`
  border-left: 1px solid #8c8c8c;
  border-right: 1px solid #8c8c8c;
`;

const MeterCell = styled(StatusCell)`
  gap: 10px;
  padding: 0 6px;
  color: #008a00;
  font-size: 17px;
`;
